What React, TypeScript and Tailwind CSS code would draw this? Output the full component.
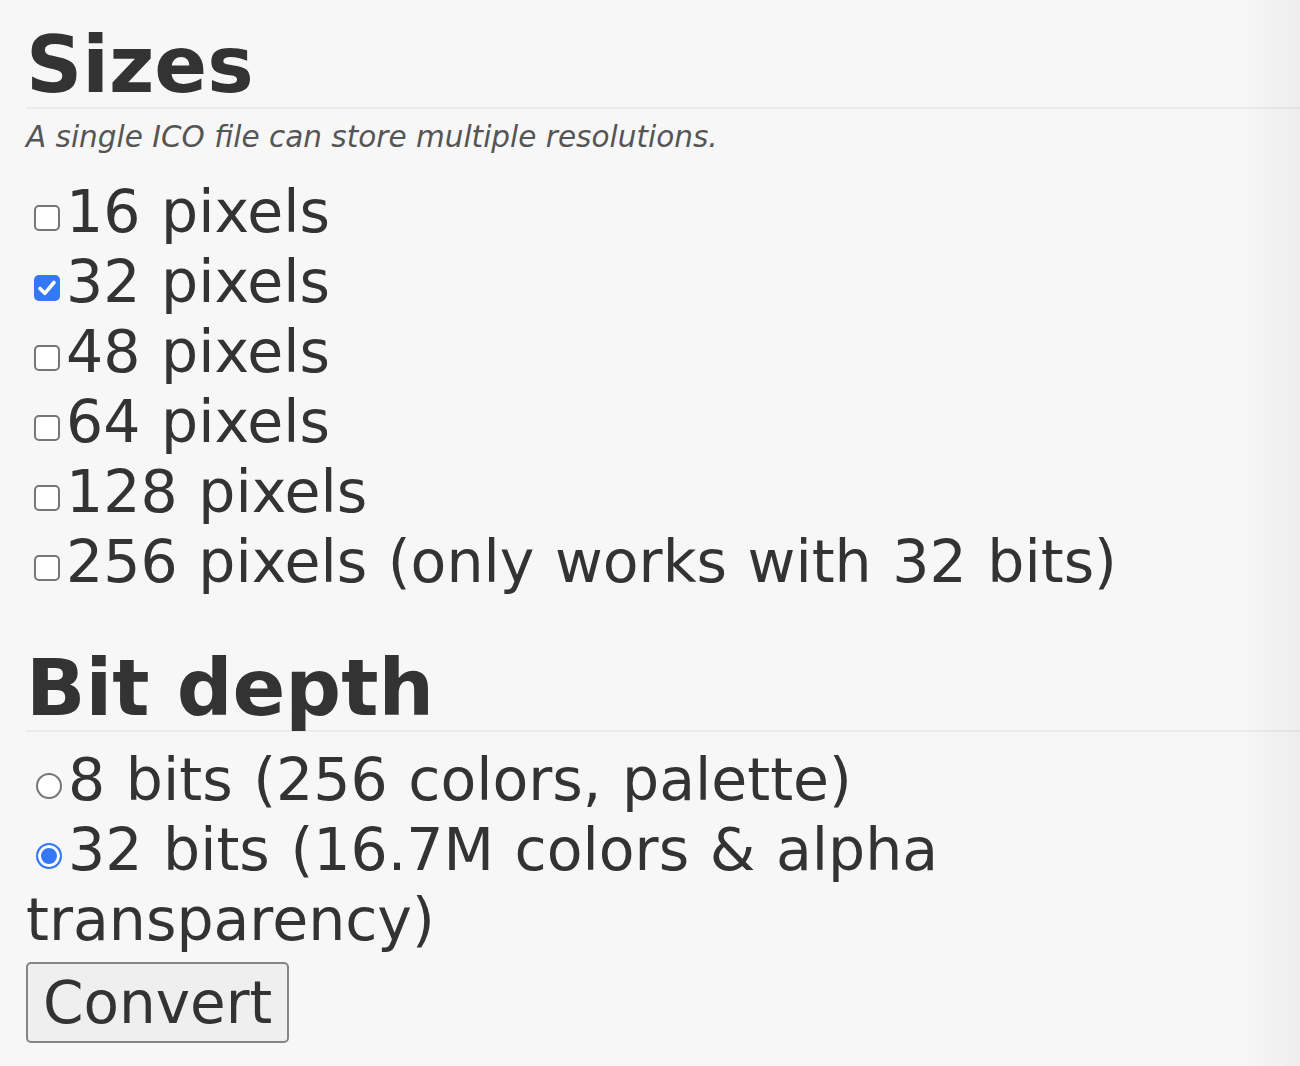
import React, { useState } from 'react';

const sizes = [
  { label: '16 pixels', value: 16 },
  { label: '32 pixels', value: 32 },
  { label: '48 pixels', value: 48 },
  { label: '64 pixels', value: 64 },
  { label: '128 pixels', value: 128 },
  { label: '256 pixels (only works with 32 bits)', value: 256 },
];

const depths = [
  { label: '8 bits (256 colors, palette)', value: 8 },
  { label: '32 bits (16.7M colors & alpha transparency)', value: 32 },
];

const CheckBox = ({ checked }: { checked: boolean }) =>
  checked ? (
    <span className="inline-block w-[26px] h-[26px] ml-[8px] mr-[6px] mb-[1px] rounded-[5px] bg-[#3478f6] align-baseline relative">
      <svg viewBox="0 0 26 26" className="absolute inset-0 w-full h-full">
        <path d="M6 13.5 L10.8 18.3 L20 7.5" fill="none" stroke="white" strokeWidth="3.6" strokeLinecap="round" strokeLinejoin="round" />
      </svg>
    </span>
  ) : (
    <span className="inline-block w-[26px] h-[26px] ml-[8px] mr-[6px] mb-[1px] rounded-[5px] border-2 border-[#767676] bg-white align-baseline" />
  );

const Radio = ({ checked }: { checked: boolean }) =>
  checked ? (
    <span className="inline-block w-[26px] h-[26px] ml-[10px] mr-[6px] mb-[1px] rounded-full border-2 border-[#3478f6] bg-[#3478f6] shadow-[inset_0_0_0_3px_white] align-baseline" />
  ) : (
    <span className="inline-block w-[26px] h-[26px] ml-[10px] mr-[6px] mb-[1px] rounded-full border-2 border-[#767676] bg-white align-baseline" />
  );

export default function App() {
  const [picked, setPicked] = useState<number[]>([32]);
  const [depth, setDepth] = useState(32);

  const toggle = (v: number) =>
    setPicked(picked.includes(v) ? picked.filter((p) => p !== v) : [...picked, v]);

  return (
    <div className="min-h-[1066px] bg-[#f7f7f7] text-[#333] relative overflow-hidden" style={{ fontFamily: '"DejaVu Sans", Verdana, sans-serif' }}>
      <div className="pl-[26px] pt-[25px]">
        {/* Sizes */}
        <h2 className="text-[78px] leading-[80px] font-bold pb-[2px] border-b-2 border-[#ebebeb]">Sizes</h2>
        <p className="mt-[11px] text-[29.5px] leading-[35px] italic text-[#555]">
          A single ICO file can store multiple resolutions.
        </p>
        <div className="mt-[22px] text-[58.5px] leading-[70px] [word-spacing:2px]">
          {sizes.map((s) => (
            <div key={s.value} className="cursor-pointer select-none" onClick={() => toggle(s.value)}>
              <CheckBox checked={picked.includes(s.value)} />
              {s.label}
            </div>
          ))}
        </div>

        {/* Bit depth */}
        <h2 className="mt-[51px] text-[78px] leading-[80px] font-bold pb-[2px] border-b-2 border-[#ebebeb]">Bit depth</h2>
        <div className="mt-[13px] text-[58.5px] leading-[70px] [word-spacing:2px]">
          {depths.map((d) => (
            <div key={d.value} className="cursor-pointer select-none" onClick={() => setDepth(d.value)}>
              <Radio checked={depth === d.value} />
              {d.label}
            </div>
          ))}
        </div>

        <button className="mt-[7px] h-[81px] px-[15px] text-[58px] leading-[70px] text-[#333] bg-[#efefef] border-2 border-[#858585] rounded-[5px]">
          Convert
        </button>
      </div>

      {/* soft edge on the right */}
      <div className="absolute top-0 right-0 w-[60px] h-full pointer-events-none bg-gradient-to-r from-transparent to-black/[0.04]" />
    </div>
  );
}
